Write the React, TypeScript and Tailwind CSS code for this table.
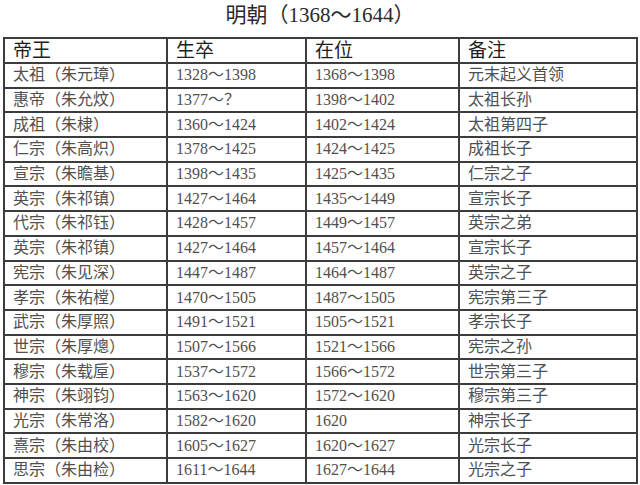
const rows: [string, string, string, string][] = [
  ["太祖（朱元璋）", "1328～1398", "1368～1398", "元末起义首领"],
  ["惠帝（朱允炆）", "1377～？", "1398～1402", "太祖长孙"],
  ["成祖（朱棣）", "1360～1424", "1402～1424", "太祖第四子"],
  ["仁宗（朱高炽）", "1378～1425", "1424～1425", "成祖长子"],
  ["宣宗（朱瞻基）", "1398～1435", "1425～1435", "仁宗之子"],
  ["英宗（朱祁镇）", "1427～1464", "1435～1449", "宣宗长子"],
  ["代宗（朱祁钰）", "1428～1457", "1449～1457", "英宗之弟"],
  ["英宗（朱祁镇）", "1427～1464", "1457～1464", "宣宗长子"],
  ["宪宗（朱见深）", "1447～1487", "1464～1487", "英宗之子"],
  ["孝宗（朱祐樘）", "1470～1505", "1487～1505", "宪宗第三子"],
  ["武宗（朱厚照）", "1491～1521", "1505～1521", "孝宗长子"],
  ["世宗（朱厚熜）", "1507～1566", "1521～1566", "宪宗之孙"],
  ["穆宗（朱载垕）", "1537～1572", "1566～1572", "世宗第三子"],
  ["神宗（朱翊钧）", "1563～1620", "1572～1620", "穆宗第三子"],
  ["光宗（朱常洛）", "1582～1620", "1620", "神宗长子"],
  ["熹宗（朱由校）", "1605～1627", "1620～1627", "光宗长子"],
  ["思宗（朱由检）", "1611～1644", "1627～1644", "光宗之子"],
];

const font = { fontFamily: '"Liberation Serif", "Noto Sans CJK SC", serif' };

export default function App() {
  return (
    <div className="h-[485px] w-[640px] overflow-hidden bg-white" style={font}>
      <h1 className="pt-[2px] text-center text-[21px] leading-[27px] font-normal text-[#2a2a2a]">明朝（1368～1644）</h1>
      <div className="px-[3px] pt-[8px]">
        <table className="w-[633px] table-fixed border-collapse border-2 border-[#3c3c3c]">
          <colgroup>
            <col className="w-[163px]" />
            <col className="w-[139px]" />
            <col className="w-[153px]" />
            <col className="w-[178px]" />
          </colgroup>
          <thead>
            <tr className="h-[25px] text-[19px] text-[#1e1e1e]">
              {["帝王", "生卒", "在位", "备注"].map((h) => (
                <th key={h} className="border-2 border-[#3c3c3c] px-[8px] py-0 text-left font-normal leading-[21px]">
                  {h}
                </th>
              ))}
            </tr>
          </thead>
          <tbody>
            {rows.map((r, i) => (
              <tr key={i} className="h-[24.7px] text-[16px] text-[#505050]">
                {r.map((c, j) => (
                  <td key={j} className="border-2 border-[#3c3c3c] px-[8px] py-0 leading-[20px] whitespace-nowrap">
                    {c}
                  </td>
                ))}
              </tr>
            ))}
          </tbody>
        </table>
      </div>
    </div>
  );
}
